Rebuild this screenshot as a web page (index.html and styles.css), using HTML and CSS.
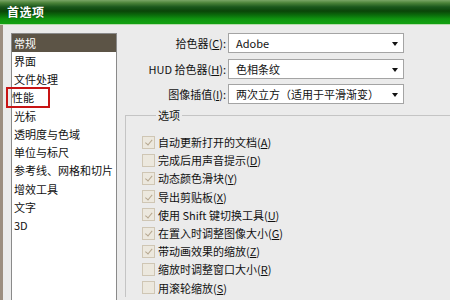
FILE: index.html
```html
<!DOCTYPE html>
<html lang="zh">
<head>
<meta charset="utf-8">
<link rel="stylesheet" href="styles.css">
</head>
<body>
<div class="window">
  <div class="titlebar"><span class="title">首选项</span></div>
  <div class="main">
    <div class="side">
      <ul class="list">
        <li class="sel">常规</li>
        <li>界面</li>
        <li>文件处理</li>
        <li class="marked"><span class="redbox">性能</span></li>
        <li>光标</li>
        <li>透明度与色域</li>
        <li>单位与标尺</li>
        <li>参考线、网格和切片</li>
        <li>增效工具</li>
        <li>文字</li>
        <li>3D</li>
      </ul>
    </div>
    <div class="content">
      <div class="form">
        <label class="lbl">拾色器(<u>C</u>):</label>
        <div class="select">Adobe<span class="arrow"></span></div>
        <label class="lbl">HUD 拾色器(<u>H</u>):</label>
        <div class="select">色相条纹<span class="arrow"></span></div>
        <label class="lbl">图像插值(<u>I</u>):</label>
        <div class="select">两次立方（适用于平滑渐变）<span class="arrow"></span></div>
      </div>
      <fieldset class="group">
        <legend>选项</legend>
        <div class="opt"><span class="cb on"></span>自动更新打开的文档(<u>A</u>)</div>
        <div class="opt"><span class="cb"></span>完成后用声音提示(<u>D</u>)</div>
        <div class="opt"><span class="cb on"></span>动态颜色滑块(<u>Y</u>)</div>
        <div class="opt"><span class="cb on"></span>导出剪贴板(<u>X</u>)</div>
        <div class="opt"><span class="cb on"></span>使用 Shift 键切换工具(<u>U</u>)</div>
        <div class="opt"><span class="cb on"></span>在置入时调整图像大小(<u>G</u>)</div>
        <div class="opt"><span class="cb on"></span>带动画效果的缩放(<u>Z</u>)</div>
        <div class="opt"><span class="cb"></span>缩放时调整窗口大小(<u>R</u>)</div>
        <div class="opt"><span class="cb"></span>用滚轮缩放(<u>S</u>)</div>
      </fieldset>
    </div>
  </div>
</div>
</body>
</html>
```
FILE: styles.css
```css
html, body {
  margin: 0;
  padding: 0;
}
body {
  width: 450px;
  height: 300px;
  overflow: hidden;
  font-family: "Noto Sans CJK SC", "Noto Sans", sans-serif;
  font-size: 11px;
  color: #111;
  background: #ebebeb;
}
.window {
  height: 300px;
  display: flex;
  flex-direction: column;
  overflow: hidden;
}
.titlebar {
  height: 24px;
  flex: none;
  background: linear-gradient(to bottom, #7aa566 0px, #4a8238 3px, #1a561c 7px, #0a4508 11px, #0b6a0b 15px, #109410 19px, #12a012 23px, #12a012 24px);
  border-bottom: 1px solid #b8dcae;
  display: flex;
  align-items: center;
  padding-left: 7px;
}
.title {
  color: #fff;
  font-weight: bold;
  font-size: 12px;
  letter-spacing: 0.5px;
  text-shadow: 0 0 1px #003300;
  line-height: 14px;
}
.main {
  flex: 1;
  display: flex;
  border-left: 3px solid #9c8e80;
  min-height: 0;
  overflow: hidden;
}
.side {
  padding: 8px 0 0 8px;
  flex: none;
  display: flex;
}
.list {
  margin: 0;
  padding: 0;
  list-style: none;
  width: 104px;
  flex: 1;
  background: #fff;
  border: 1px solid #8a8a8a;
  border-bottom: none;
}
.list li {
  height: 18.2px;
  line-height: 18px;
  padding-left: 2px;
  white-space: nowrap;
  position: relative;
}
.list li.sel {
  background: #5c5446;
  color: #fff;
}
.redbox {
  position: absolute;
  left: -6px;
  top: -2px;
  width: 36px;
  height: 17px;
  border: 2px solid #c81414;
  padding-left: 4px;
  line-height: 17px;
}
.content {
  flex: 1;
  padding-top: 8px;
  min-width: 0;
  overflow: hidden;
}
.form {
  display: grid;
  grid-template-columns: 109px 176px;
  column-gap: 2px;
  row-gap: 5.5px;
  align-items: center;
}
.lbl {
  text-align: right;
  line-height: 20px;
  white-space: nowrap;
}
.select {
  position: relative;
  height: 18px;
  line-height: 18px;
  border: 1px solid #a4a4a4;
  background: #fff;
  padding-left: 7px;
  white-space: nowrap;
}
.arrow {
  position: absolute;
  right: 5px;
  top: 8px;
  width: 0;
  height: 0;
  border-left: 3.5px solid transparent;
  border-right: 3.5px solid transparent;
  border-top: 4px solid #111;
}
.group {
  margin: 3px 0 0 8px;
  padding: 9px 0 0 16px;
  border: 1px solid #c4c4c4;
  border-right: none;
  border-bottom: none;
  min-width: 0;
}
.group legend {
  margin-left: 14px;
  padding: 0 2px;
  line-height: 17px;
}
.opt {
  height: 18.2px;
  display: flex;
  align-items: center;
  white-space: nowrap;
}
.cb {
  width: 11px;
  height: 11px;
  border: 1px solid #cfc6b4;
  background: #ece8de;
  margin-right: 3px;
  flex: none;
  position: relative;
}
.cb.on::after {
  content: "";
  position: absolute;
  left: 3.5px;
  top: 1.5px;
  width: 2.5px;
  height: 5.5px;
  border-right: 1.5px solid #b5a68e;
  border-bottom: 1.5px solid #b5a68e;
  transform: rotate(40deg);
}
u {
  text-decoration: underline;
  text-underline-offset: 1px;
}
```
